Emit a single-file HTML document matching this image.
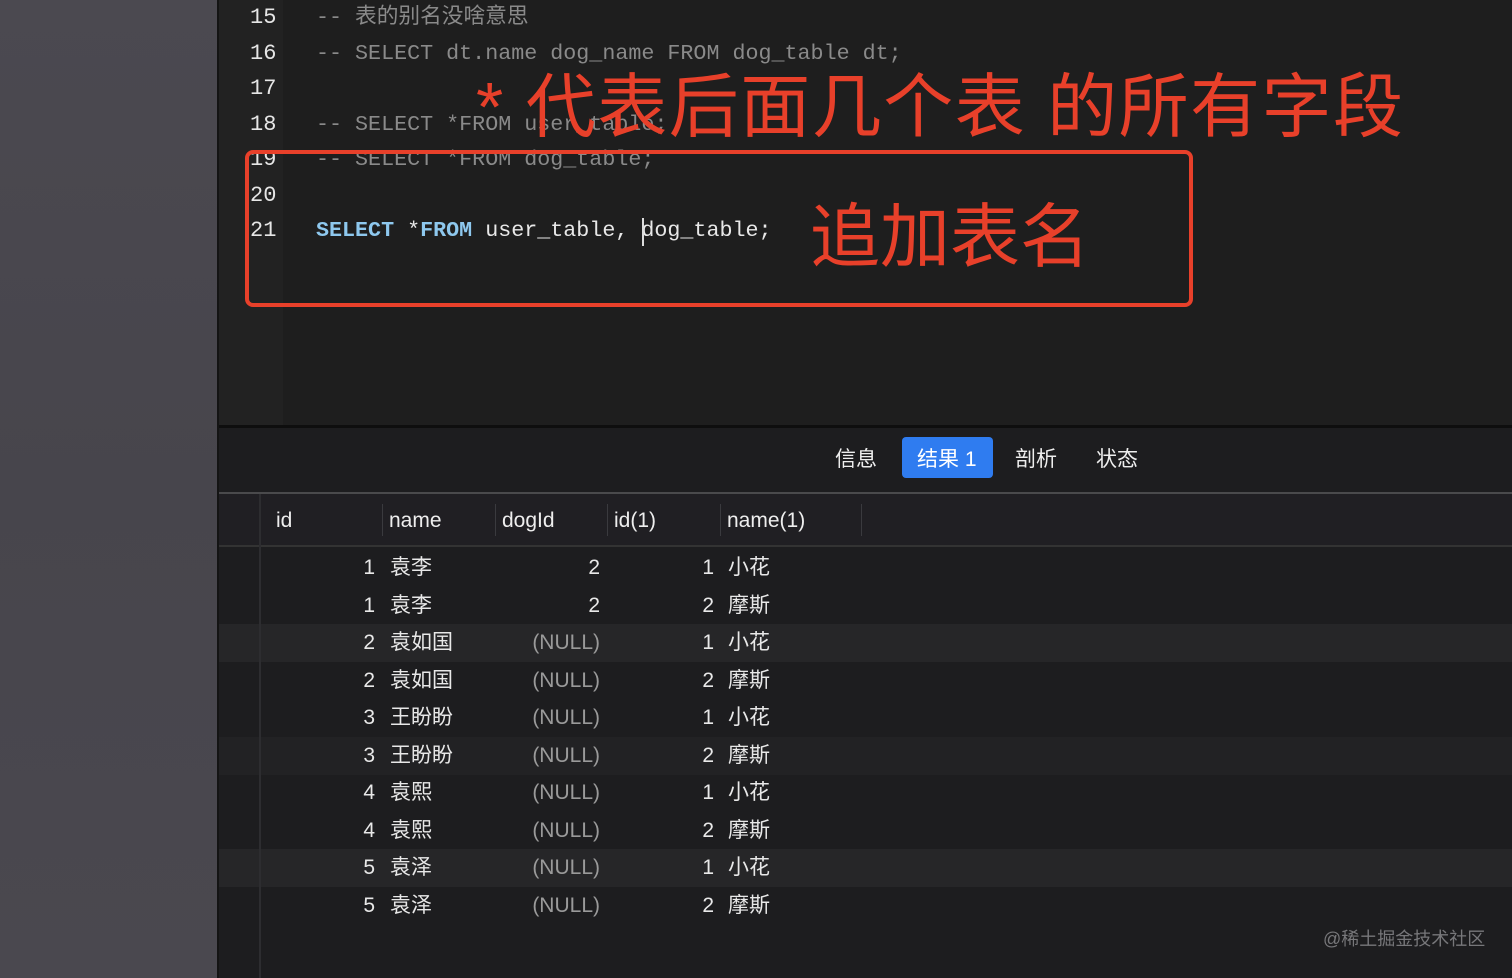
<!DOCTYPE html><html><head><meta charset="utf-8"><style>
body{margin:0;width:1512px;height:978px;overflow:hidden;background:#1d1d1f;font-family:"Liberation Sans","Noto Sans CJK SC",sans-serif;position:relative}
.a{position:absolute;white-space:pre}
.ln{position:absolute;left:250px;font:22px "Liberation Mono","Noto Sans CJK SC",monospace;color:#e6e6e6;line-height:36px}
.code{position:absolute;left:316px;font:21.7px "Liberation Mono","Noto Sans CJK SC",monospace;color:#8a8a8a;line-height:36px;white-space:pre}
.row{position:absolute;left:219px;width:1293px;height:37.5px;font-size:21px;color:#e8e8e8;line-height:37.5px}
.row span{position:absolute}
.r1{right:1137px;text-align:right}
.n{left:171px}
.d{right:912px}
.i2{right:798px}
.n2{left:509px}
.nu{color:#9a9a9a}
.h{position:absolute;top:496px;font-size:21px;color:#eee;line-height:50px}
.sep{position:absolute;top:504px;width:1px;height:32px;background:#3a3a3e}
</style></head><body>
<div class="a" style="left:0;top:0;width:217px;height:978px;background:linear-gradient(180deg,#4b4950,#47454c 50%,#4a484f)"></div>
<div class="a" style="left:217px;top:0;width:2px;height:978px;background:#141414"></div>
<div class="a" style="left:219px;top:0;width:1293px;height:425px;background:#1e1e1e"></div>
<div class="a" style="left:219px;top:0;width:64px;height:425px;background:#222"></div>
<div class="a" style="left:219px;top:425px;width:1293px;height:3px;background:#0e0e0e"></div>
<div class="ln" style="top:0px">15</div><div class="ln" style="top:36px">16</div><div class="ln" style="top:71px">17</div><div class="ln" style="top:107px">18</div><div class="ln" style="top:142px">19</div><div class="ln" style="top:178px">20</div><div class="ln" style="top:213px">21</div>
<div class="code" style="top:0px">-- 表的别名没啥意思</div>
<div class="code" style="top:36px">-- SELECT dt.name dog_name FROM dog_table dt;</div>
<div class="code" style="top:107px">-- SELECT *FROM user_table;</div>
<div class="code" style="top:142px">-- SELECT *FROM dog_table;</div>
<div class="code" style="top:213px;color:#e8e8e8"><b style="color:#8ec8ee">SELECT</b> *<b style="color:#8ec8ee">FROM</b> user_table, dog_table;</div>
<div class="a" style="left:642px;top:218px;width:2px;height:28px;background:#ddd"></div>
<div class="a" style="left:476px;top:62px;font-size:70px;letter-spacing:1.5px;color:#e8402a;line-height:90px">* 代表后面几个表 的所有字段</div>
<div class="a" style="left:245px;top:150px;width:940px;height:149px;border:4px solid #e8402a;border-radius:8px"></div>
<div class="a" style="left:810px;top:195px;font-size:70px;color:#e8402a;line-height:84px">追加表名</div>
<div class="a" style="left:835px;top:442px;font-size:21px;color:#eee;line-height:36px">信息</div>
<div class="a" style="left:902px;top:437px;width:91px;height:41px;background:#2f7cf0;border-radius:4px"></div>
<div class="a" style="left:917px;top:442px;font-size:21px;color:#fff;line-height:36px">结果 1</div>
<div class="a" style="left:1015px;top:442px;font-size:21px;color:#eee;line-height:36px">剖析</div>
<div class="a" style="left:1096px;top:442px;font-size:21px;color:#eee;line-height:36px">状态</div>
<div class="a" style="left:219px;top:492px;width:1293px;height:2px;background:#4a4a4c"></div>
<div class="a" style="left:219px;top:494px;width:1293px;height:51px;background:#201f23"></div>
<div class="a" style="left:219px;top:545px;width:1293px;height:2px;background:#333"></div>
<div class="h" style="left:276px">id</div><div class="sep" style="left:382px"></div>
<div class="h" style="left:389px">name</div><div class="sep" style="left:495px"></div>
<div class="h" style="left:502px">dogId</div><div class="sep" style="left:607px"></div>
<div class="h" style="left:614px">id(1)</div><div class="sep" style="left:720px"></div>
<div class="h" style="left:727px">name(1)</div><div class="sep" style="left:861px"></div>
<div class="row" style="top:549px"><span class="r1">1</span><span class="n">袁李</span><span class="d">2</span><span class="i2">1</span><span class="n2">小花</span></div>
<div class="row" style="top:587px"><span class="r1">1</span><span class="n">袁李</span><span class="d">2</span><span class="i2">2</span><span class="n2">摩斯</span></div>
<div class="row" style="top:624px;background:#262628"><span class="r1">2</span><span class="n">袁如国</span><span class="d nu">(NULL)</span><span class="i2">1</span><span class="n2">小花</span></div>
<div class="row" style="top:662px"><span class="r1">2</span><span class="n">袁如国</span><span class="d nu">(NULL)</span><span class="i2">2</span><span class="n2">摩斯</span></div>
<div class="row" style="top:699px"><span class="r1">3</span><span class="n">王盼盼</span><span class="d nu">(NULL)</span><span class="i2">1</span><span class="n2">小花</span></div>
<div class="row" style="top:737px;background:#222224"><span class="r1">3</span><span class="n">王盼盼</span><span class="d nu">(NULL)</span><span class="i2">2</span><span class="n2">摩斯</span></div>
<div class="row" style="top:774px"><span class="r1">4</span><span class="n">袁熙</span><span class="d nu">(NULL)</span><span class="i2">1</span><span class="n2">小花</span></div>
<div class="row" style="top:812px"><span class="r1">4</span><span class="n">袁熙</span><span class="d nu">(NULL)</span><span class="i2">2</span><span class="n2">摩斯</span></div>
<div class="row" style="top:849px;background:#262628"><span class="r1">5</span><span class="n">袁泽</span><span class="d nu">(NULL)</span><span class="i2">1</span><span class="n2">小花</span></div>
<div class="row" style="top:887px"><span class="r1">5</span><span class="n">袁泽</span><span class="d nu">(NULL)</span><span class="i2">2</span><span class="n2">摩斯</span></div>
<div class="a" style="left:259px;top:494px;width:2px;height:484px;background:#2d2d30"></div>
<div class="a" style="left:1323px;top:927px;font-size:18px;color:#77777a;line-height:24px">@稀土掘金技术社区</div>
</body></html>
